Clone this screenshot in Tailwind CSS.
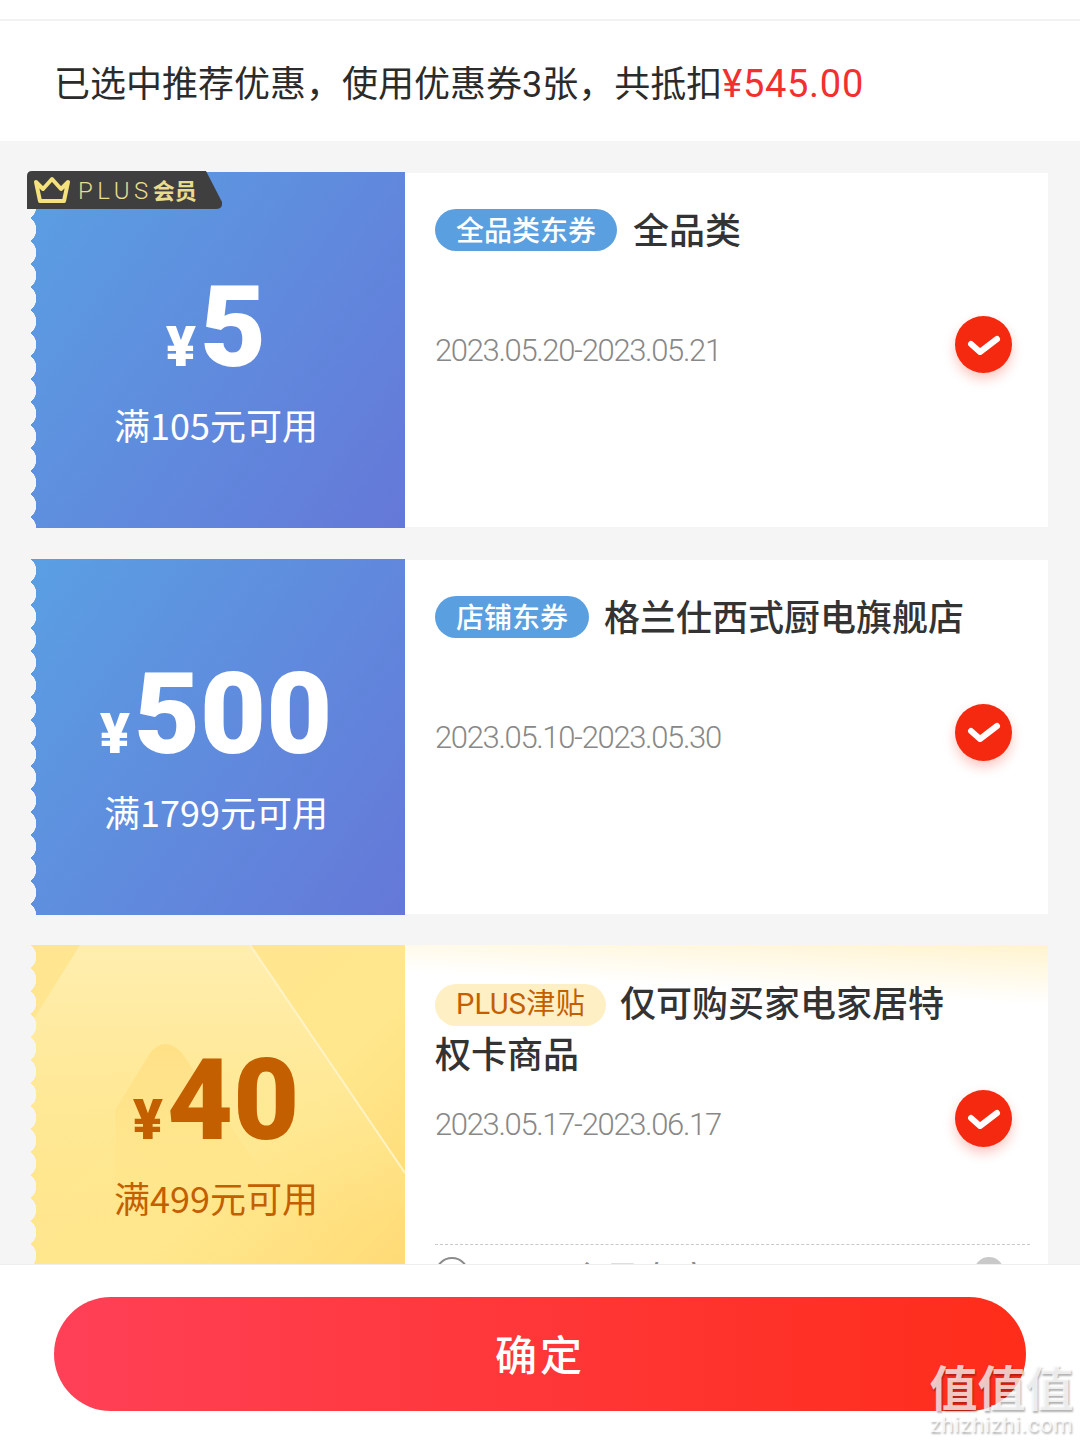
<!DOCTYPE html>
<html lang="en">
<head>
  <meta charset="UTF-8" />
  <meta name="viewport" content="width=device-width, initial-scale=1.0"/>
  <title>优惠券</title>
  <script src="https://cdn.jsdelivr.net/npm/@tailwindcss/browser@4"></script>
</head>
<body class="bg-[#f5f5f5] font-['Noto_Sans_CJK_SC',sans-serif]">
  <div class="relative flex h-[1443px] w-[1080px] flex-col overflow-hidden">
    <!-- header -->
    <div class="h-[19px] bg-white"></div>
    <div class="h-[2px] bg-[#f2f2f2]"></div>
    <div class="flex h-[120px] items-center bg-white pt-[3px] pl-[54px] text-[36px] leading-[52px] text-[#2b2b2b]">
      <div>已选中推荐优惠，使用优惠券<span class="font-['Roboto','Noto_Sans_CJK_SC',sans-serif]">3</span>张，共抵扣<span class="font-['Roboto',sans-serif] text-[38px] tracking-[0.7px] text-[#f23030]">¥545.00</span></div>
    </div>

    <!-- coupons -->
    <div class="flex min-h-0 flex-1 flex-col gap-[30.5px] overflow-hidden pt-[31px] pr-[32px] pl-[30px]">

      <div class="relative flex h-[356px] shrink-0">
        <div class="relative flex w-[375px] shrink-0 flex-col items-center bg-[linear-gradient(125deg,#5a9fe3,#6578d8)] pr-[3px] text-white">
          <div class="absolute top-0 bottom-0 left-0 w-[7px] bg-[radial-gradient(circle_at_-8px_50%,#f5f5f5_14px,transparent_14.5px)] bg-[length:8px_23px]"></div>
          <div class="mt-[90px] flex h-[130px] items-center">
            <span class="mt-[40px] mr-[4px] font-['Roboto',sans-serif] text-[56px] font-black">¥</span><span class="font-['Roboto',sans-serif] text-[114px] leading-none font-black">5</span>
          </div>
          <div class="mt-[7px] text-[36px] leading-[50px]">满105元可用</div>
        </div>
        <div class="relative my-px flex-1 bg-white pt-[30px] pl-[30px]">
          <div class="min-h-[102px] w-[535px] text-[36px] leading-[51px] font-medium text-[#333333]">
            <span class="mr-[16px] inline-block h-[42px] rounded-full bg-[#5a9fe0] px-[21px] align-[3px] text-[28px] leading-[40px] text-white">全品类东券</span>全品类
          </div>
          <div class="mt-[26px] font-['Roboto',sans-serif] text-[31px] leading-[40px] font-light tracking-[-1.33px] text-[#888888]">2023.05.20-2023.05.21</div>
          <div class="absolute top-[143px] right-[36px] flex h-[57px] w-[57px] items-center justify-center rounded-full bg-[#f5290f] shadow-[0_6px_12px_rgba(245,41,15,0.25)]">
            <svg width="34" height="26" viewBox="0 0 34 26" fill="none"><path d="M4 12 L13 20 L30 7" stroke="white" stroke-width="6" stroke-linecap="round" stroke-linejoin="round"/></svg>
          </div>
        </div>
        <!-- PLUS badge -->
        <div class="absolute top-[-1px] left-[-3px] flex h-[38px] w-[195px] items-center">
          <svg class="absolute inset-0" width="195" height="38" viewBox="0 0 195 38"><path d="M5 0 H179 L195 31 Q196 38 189 38 H0 V5 Q0 0 5 0 Z" fill="#3f3f3f"/></svg>
          <svg class="relative ml-[6px]" width="38" height="28" viewBox="0 0 38 28" fill="none"><path d="M3 6 L10 13 L19 3 L28 13 L35 6 L31 25 H7 Z" stroke="#f5e27c" stroke-width="4" stroke-linejoin="round"/></svg>
          <span class="relative ml-[7px] text-[24px] leading-none tracking-[4.5px] text-[#e8dc8e]"><span class="font-['Roboto',sans-serif] font-light">PLUS</span><span class="text-[22px] font-bold tracking-normal">会员</span></span>
        </div>
      </div>

      <div class="relative flex h-[356px] shrink-0">
        <div class="relative flex w-[375px] shrink-0 flex-col items-center bg-[linear-gradient(125deg,#5a9fe3,#6578d8)] pr-[3px] text-white">
          <div class="absolute top-0 bottom-0 left-0 w-[7px] bg-[radial-gradient(circle_at_-8px_50%,#f5f5f5_14px,transparent_14.5px)] bg-[length:8px_23px]"></div>
          <div class="mt-[90px] flex h-[130px] items-center">
            <span class="mt-[40px] mr-[4px] font-['Roboto',sans-serif] text-[56px] font-black">¥</span><span class="font-['Roboto',sans-serif] text-[114px] leading-none font-black">500</span>
          </div>
          <div class="mt-[7px] text-[36px] leading-[50px]">满1799元可用</div>
        </div>
        <div class="relative my-px flex-1 bg-white pt-[30px] pl-[30px]">
          <div class="min-h-[102px] w-[535px] text-[36px] leading-[51px] font-medium text-[#333333]">
            <span class="mr-[15px] inline-block h-[42px] rounded-full bg-[#5a9fe0] px-[21px] align-[3px] text-[28px] leading-[40px] text-white">店铺东券</span>格兰仕西式厨电旗舰店
          </div>
          <div class="mt-[26px] font-['Roboto',sans-serif] text-[31px] leading-[40px] font-light tracking-[-1.33px] text-[#888888]">2023.05.10-2023.05.30</div>
          <div class="absolute top-[144px] right-[36px] flex h-[57px] w-[57px] items-center justify-center rounded-full bg-[#f5290f] shadow-[0_6px_12px_rgba(245,41,15,0.25)]">
            <svg width="34" height="26" viewBox="0 0 34 26" fill="none"><path d="M4 12 L13 20 L30 7" stroke="white" stroke-width="6" stroke-linecap="round" stroke-linejoin="round"/></svg>
          </div>
        </div>
      </div>

      <div class="relative flex h-[400px] shrink-0">
        <div class="relative flex w-[375px] shrink-0 flex-col items-center overflow-hidden bg-[linear-gradient(135deg,#ffe590,#ffe78d_55%,#ffd469)] pr-[3px] text-[#c45f00]">
          <svg class="absolute inset-0" width="375" height="400" viewBox="0 0 375 400" fill="none">
            <defs>
              <linearGradient id="sheet" x1="0" y1="0" x2="0" y2="1"><stop offset="0" stop-color="#ffeeb0"/><stop offset="0.7" stop-color="#ffe88f" stop-opacity="0.15"/></linearGradient>
              <linearGradient id="peak" x1="0" y1="0" x2="0" y2="1"><stop offset="0" stop-color="#ffdc7d" stop-opacity="0.7"/><stop offset="1" stop-color="#ffe88f" stop-opacity="0"/></linearGradient>
            </defs>
            <path d="M0 80 L50 0 H220 L375 228 V400 H0 Z" fill="url(#sheet)"/>
            <path d="M220 0 L375 228" stroke="#fff3c6" stroke-width="2"/>
            <path d="M85 165 L120 108 Q135 90 152 108 L300 330 H85 Z" fill="url(#peak)"/>
          </svg>
          <div class="absolute top-0 bottom-0 left-0 w-[7px] bg-[radial-gradient(circle_at_-8px_50%,#f5f5f5_14px,transparent_14.5px)] bg-[length:8px_23px]"></div>
          <div class="relative mt-[90px] flex h-[130px] items-center">
            <span class="mt-[40px] mr-[4px] font-['Roboto',sans-serif] text-[56px] font-black">¥</span><span class="font-['Roboto',sans-serif] text-[114px] leading-none font-black">40</span>
          </div>
          <div class="relative mt-[7px] text-[36px] leading-[50px]">满499元可用</div>
        </div>
        <div class="relative flex-1 bg-[linear-gradient(183deg,#fff3cf,#ffffff_60px)] pt-[31px] pl-[30px]">
          <div class="min-h-[102px] w-[535px] text-[36px] leading-[51px] font-medium text-[#333333]">
            <span class="mr-[14px] inline-block h-[42px] rounded-full bg-[#ffefc4] px-[21px] align-[3px] font-['Roboto','Noto_Sans_CJK_SC',sans-serif] text-[29px] leading-[40px] font-normal tracking-[0.3px] text-[#c45f00]">PLUS津贴</span>仅可购买家电家居特权卡商品
          </div>
          <div class="mt-[27px] font-['Roboto',sans-serif] text-[31px] leading-[40px] font-light tracking-[-1.33px] text-[#888888]">2023.05.17-2023.06.17</div>
          <div class="absolute top-[145px] right-[36px] flex h-[57px] w-[57px] items-center justify-center rounded-full bg-[#f5290f] shadow-[0_6px_12px_rgba(245,41,15,0.25)]">
            <svg width="34" height="26" viewBox="0 0 34 26" fill="none"><path d="M4 12 L13 20 L30 7" stroke="white" stroke-width="6" stroke-linecap="round" stroke-linejoin="round"/></svg>
          </div>
          <div class="mt-[99px] mr-[18px] flex items-start border-t border-dashed border-[#c9c9c9] pt-[12px]">
            <span class="h-[34px] w-[34px] shrink-0 rounded-full border-2 border-[#8c8c8c]"></span>
            <span class="mt-[3px] ml-[11px] text-[36px] leading-[34px] text-[#8c8c8c]">PLUS会员专享</span>
            <span class="mr-[26px] ml-auto h-[30px] w-[30px] rounded-full bg-[#c9c9c9]"></span>
          </div>
        </div>
      </div>
    </div>

    <!-- footer -->
    <div class="relative h-[179px] shrink-0 border-t border-[#eeeeee] bg-white pt-[32px]">
      <div class="mx-[54px] flex h-[114px] items-center justify-center rounded-full bg-[linear-gradient(90deg,#ff4057,#ff2d19)] pb-[4px] text-[42px] font-medium tracking-[3px] text-white">确定</div>
    </div>

    <!-- watermark -->
    <div class="absolute top-[1358px] left-[929px] w-[145px] text-center text-white/75 [text-shadow:1px_2px_2px_rgba(0,0,0,0.3)]">
      <div class="text-[48px] leading-[54px] font-bold">值值值</div>
      <div class="mt-[1px] font-['Roboto',sans-serif] text-[22px] leading-[24px] tracking-[0.7px]">zhizhizhi.com</div>
    </div>
  </div>
</body>
</html>
